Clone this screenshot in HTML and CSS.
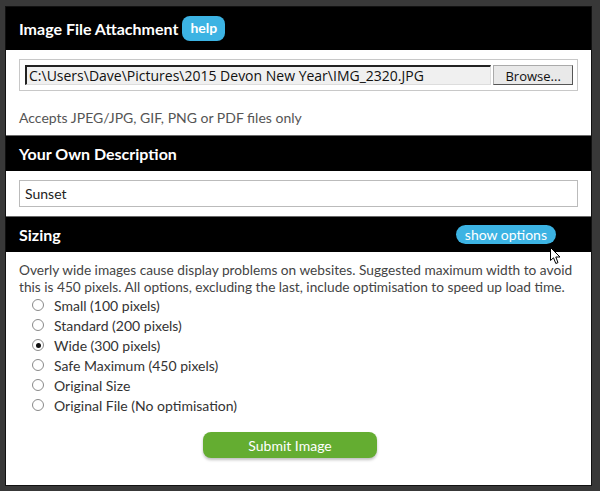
FILE: index.html
```html
<!DOCTYPE html>
<html lang="en">
<head>
    <meta charset="UTF-8">
    <title>Image File Attachment</title>
    <link rel="stylesheet" href="styles.css">
</head>
<body>
    <div class="panel">
        <div class="bar bar-first">
            <span class="bar-title">Image File Attachment</span>
            <span class="help">help</span>
        </div>
        <div class="section">
            <div class="file-box">
                <div class="file-path">C:\Users\Dave\Pictures\2015 Devon New Year\IMG_2320.JPG</div>
                <div class="browse">Browse...</div>
            </div>
            <p class="note">Accepts JPEG/JPG, GIF, PNG or PDF files only</p>
        </div>

        <div class="bar">
            <span class="bar-title">Your Own Description</span>
        </div>
        <div class="section">
            <div class="text-box">Sunset</div>
        </div>

        <div class="bar bar-sizing">
            <span class="bar-title">Sizing</span>
            <span class="options">show options</span>
        </div>
        <div class="section section-sizing">
            <p class="hint">Overly wide images cause display problems on websites. Suggested maximum width to avoid<br>this is 450 pixels. All options, excluding the last, include optimisation to speed up load time.</p>
            <ul class="sizes">
                <li><span class="radio"></span>Small (100 pixels)</li>
                <li><span class="radio"></span>Standard (200 pixels)</li>
                <li><span class="radio checked"></span>Wide (300 pixels)</li>
                <li><span class="radio"></span>Safe Maximum (450 pixels)</li>
                <li><span class="radio"></span>Original Size</li>
                <li><span class="radio"></span>Original File (No optimisation)</li>
            </ul>
            <div class="submit-row">
                <button class="submit">Submit Image</button>
            </div>
        </div>

        <!-- mouse pointer over the show options button -->
        <svg class="pointer" width="12" height="18" viewBox="0 0 12 18">
            <path d="M0.5 0.5 L0.5 13.5 L3.5 10.8 L5.8 16.5 L8 15.6 L5.8 10 L10 10 Z" fill="#fff" stroke="#000" stroke-width="1"/>
        </svg>
    </div>
</body>
</html>
```

FILE: styles.css
```css
body {
    margin: 0;
    padding: 6px 0 0 5px;
    background: #383838;
    font-family: Lato, "Open Sans", sans-serif;
}
.panel {
    position: relative;
    width: 585px;
    height: 478px;
    background: #fff;
    border: 1px solid #111;
}
.bar {
    display: flex;
    align-items: center;
    justify-content: space-between;
    height: 36px;
    padding: 0 13px;
    background: #000;
    border-top: 1px solid #6a6a6a;
    box-sizing: border-box;
}
.bar-first {
    justify-content: flex-start;
    height: 43px;
    border-top: none;
}
.bar-title {
    color: #fff;
    font-size: 16px;
    font-weight: bold;
}
.help {
    margin-left: 4px;
    padding: 0 8px;
    height: 25px;
    line-height: 24px;
    border-radius: 8px;
    background: #3cb3e3;
    color: #fff;
    font-size: 14px;
    font-weight: bold;
}
.bar-sizing {
    padding-right: 35px;
}
.options {
    padding: 0 9px;
    height: 19px;
    line-height: 19px;
    border-radius: 10px;
    background: #3cb3e3;
    color: #fff;
    font-size: 14px;
}
.section {
    padding: 9px 13px;
}
.file-box {
    display: flex;
    gap: 2px;
    height: 32px;
    padding: 5px 4px 5px 5px;
    border: 1px solid #c8c8c8;
    box-sizing: border-box;
}
.file-path {
    width: 468px;
    padding-left: 2px;
    background: #f0f0f0;
    border-top: 2px solid #222;
    border-left: 2px solid #222;
    border-right: 1px solid #ddd;
    border-bottom: 1px solid #ddd;
    box-sizing: border-box;
    font-family: "Open Sans", sans-serif;
    font-size: 14px;
    line-height: 18px;
    color: #111;
    white-space: nowrap;
    overflow: hidden;
}
.browse {
    width: 80px;
    text-align: center;
    background: #e9e9e9;
    border: 1px solid #aaa;
    border-right-color: #555;
    border-bottom-color: #555;
    box-sizing: border-box;
    font-family: "Open Sans", sans-serif;
    font-size: 13px;
    line-height: 20px;
    color: #111;
}
.note {
    margin: 18px 0 0;
    font-size: 14px;
    color: #555;
}
.text-box {
    height: 27px;
    padding-left: 5px;
    border: 1px solid #bbb;
    box-sizing: border-box;
    font-size: 14px;
    line-height: 25px;
    color: #222;
}
.section-sizing {
    padding-top: 9px;
}
.hint {
    margin: 0;
    font-size: 13.7px;
    line-height: 17px;
    color: #444;
    white-space: nowrap;
}
.sizes {
    list-style: none;
    margin: 0;
    padding: 0 0 0 13px;
}
.sizes li {
    display: flex;
    align-items: center;
    height: 20px;
    font-size: 14px;
    color: #333;
}
.radio {
    width: 10px;
    height: 10px;
    margin-right: 10px;
    border: 1px solid #8a8a8a;
    border-radius: 50%;
    background: #fff;
    position: relative;
}
.radio.checked::after {
    content: "";
    position: absolute;
    left: 2.5px;
    top: 2.5px;
    width: 5px;
    height: 5px;
    border-radius: 50%;
    background: #111;
}
.submit-row {
    margin-top: 17px;
    padding-left: 184px;
}
.submit {
    width: 174px;
    height: 26px;
    border: none;
    border-radius: 8px;
    background: #64ad31;
    box-shadow: 0 2px 3px rgba(0, 0, 0, 0.25);
    color: #fff;
    font-family: Lato, sans-serif;
    font-size: 14px;
}
.pointer {
    position: absolute;
    left: 544px;
    top: 240px;
}
```
